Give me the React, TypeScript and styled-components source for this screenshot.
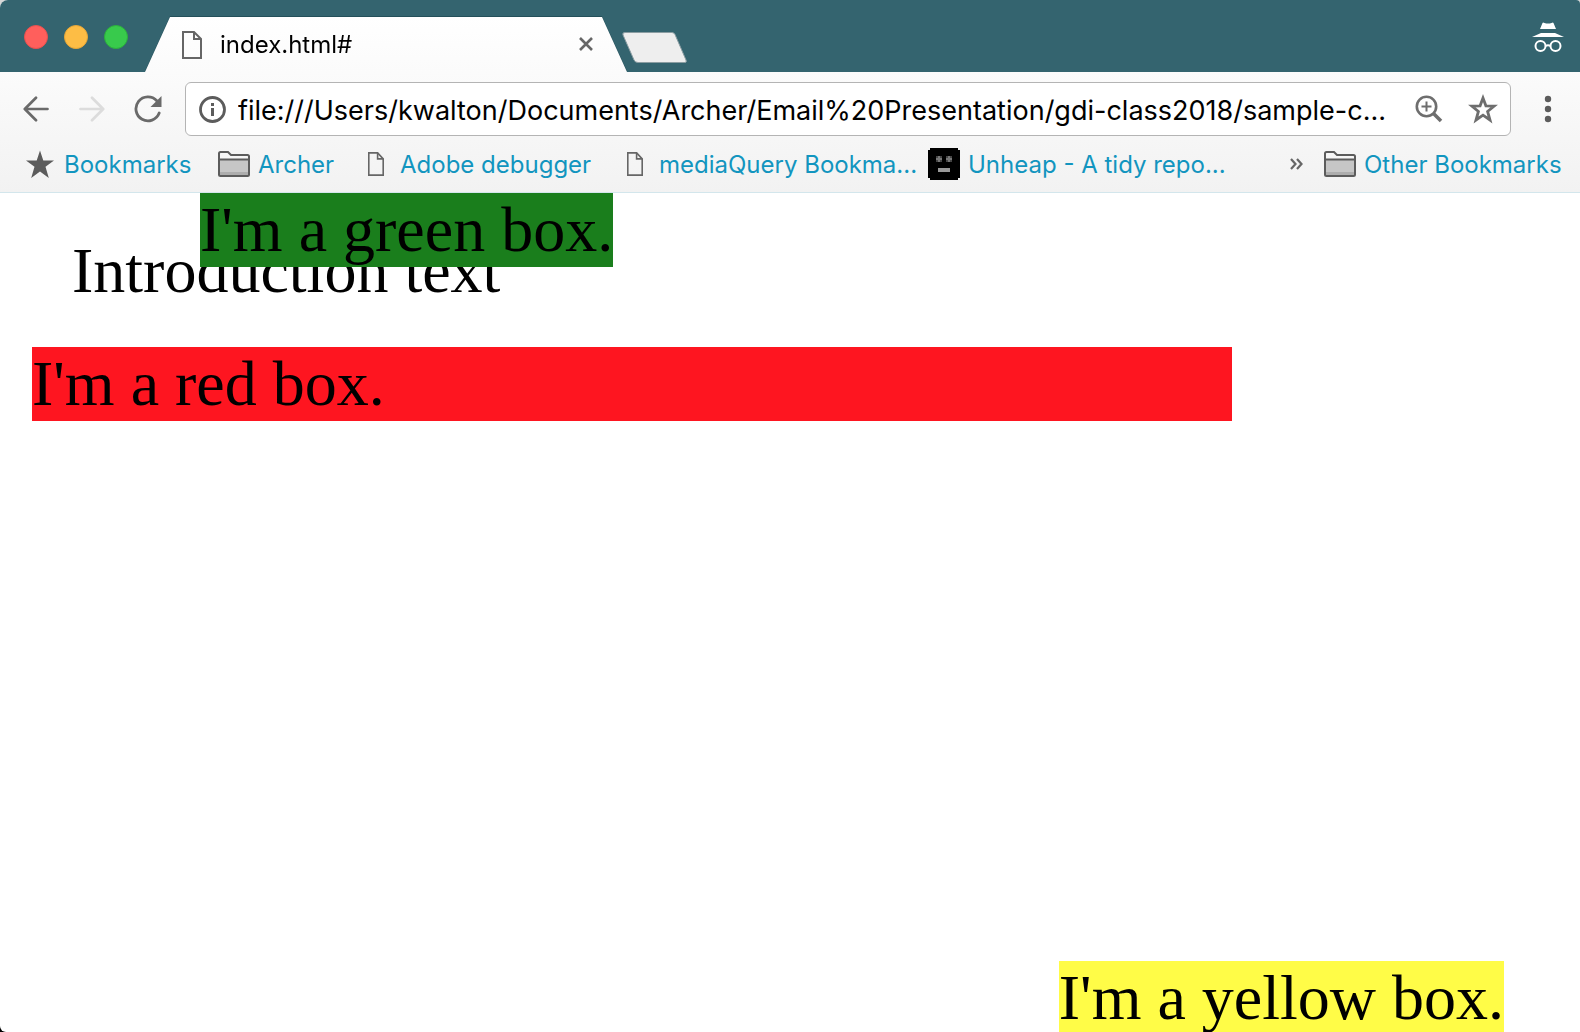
import React from "react";
import styled, { createGlobalStyle } from "styled-components";

const GlobalStyle = createGlobalStyle`
  * { box-sizing: border-box; }
  html { background: linear-gradient(#d8d8d8, #000); height: 100%; }
  body { margin: 0; }
  button { padding: 0; border: 0; background: none; cursor: pointer; }
`;

const uiFont = `Inter, "Liberation Sans", sans-serif`;

const BrowserWindow = styled.div`
  display: flex;
  flex-direction: column;
  height: 100vh;
  overflow: hidden;
  border-radius: 8px 4px 0 6px;
  background: #fff;
  font-family: ${uiFont};
`;

const TitleBar = styled.header`
  display: flex;
  align-items: flex-end;
  flex: none;
  height: 72px;
  padding: 0 16px 0 24px;
  background: #34646f;
`;

const TrafficLights = styled.div`
  display: flex;
  gap: 16px;
  width: 121px;
  padding-bottom: 23px;
`;

const Light = styled.button<{ $fill: string; $edge: string }>`
  width: 24px;
  height: 24px;
  border: 1px solid ${(p) => p.$edge};
  border-radius: 50%;
  background: ${(p) => p.$fill};
`;

const TabEdge = styled.div`
  flex: 0 1 482px;
  filter: drop-shadow(0 -1px 0 #24505a);
`;

const Tab = styled.div`
  display: flex;
  align-items: center;
  height: 55px;
  padding: 1px 34px 0 37px;
  background: linear-gradient(#fff, #fbfbfb);
  clip-path: polygon(25px 0, calc(100% - 25px) 0, 100% 100%, 0 100%);
`;

const TabTitle = styled.span`
  flex: 1;
  padding-left: 18px;
  font-size: 24px;
  line-height: 32px;
  color: #000;
`;

const NewTab = styled.button`
  display: flex;
  margin: 0 auto 8px -6px;
`;

const Incognito = styled.div`
  display: flex;
  padding-bottom: 18px;
`;

const Controls = styled.div`
  flex: none;
  padding-top: 10px;
  border-bottom: 1px solid #d3e6ec;
  background: linear-gradient(#fbfbfb, #f2f2f2);
`;

const Toolbar = styled.div`
  display: flex;
  align-items: center;
  padding: 0 4px 0 8px;
`;

const ToolButton = styled.button`
  display: flex;
  align-items: center;
  justify-content: center;
  flex: none;
  width: 56px;
  height: 54px;
`;

const Omnibox = styled.form`
  display: flex;
  align-items: center;
  flex: 1;
  min-width: 0;
  height: 54px;
  margin: 0 9px;
  border: 1px solid #b4b4b4;
  border-radius: 6px;
  background: #fff;
`;

const PageInfo = styled(ToolButton)`
  width: 52px;
  height: 52px;
`;

const OmniAction = styled(ToolButton)`
  width: 54px;
  height: 52px;
`;

const Address = styled.input`
  flex: 1;
  min-width: 0;
  height: 52px;
  padding: 2px 0 0;
  border: 0;
  outline: 0;
  background: none;
  font-family: ${uiFont};
  font-size: 27px;
  color: #000;
  text-overflow: ellipsis;
`;

const BookmarksBar = styled.nav`
  display: flex;
  align-items: center;
  height: 56px;
  padding: 0 14px 0 24px;
`;

const Bookmark = styled.a<{ $width?: number }>`
  display: flex;
  align-items: center;
  gap: 8px;
  flex: none;
  width: ${(p) => (p.$width ? `${p.$width}px` : "auto")};
  font-size: 24px;
  line-height: 32px;
  white-space: nowrap;
  color: #1295bf;
  text-decoration: none;
`;

const BookmarkIcon = styled.span`
  display: flex;
  align-items: center;
  justify-content: center;
  width: 32px;
  height: 32px;
`;

const BookmarkLabel = styled.span`
  padding-top: 2px;
`;

const Overflow = styled.button`
  display: flex;
  margin: 0 21px 0 auto;
`;

const Viewport = styled.main`
  position: relative;
  flex: 1;
  min-height: 0;
  overflow: hidden;
  padding: 41px 32px 0;
  font-family: "Liberation Serif", "Times New Roman", serif;
  font-size: 64px;
  line-height: 74px;
  color: #000;
`;

const Intro = styled.p`
  margin: 0 40px 39px;
`;

const RedBox = styled.div`
  max-width: 1200px;
  background: #fe1520;
`;

const GreenBox = styled.div`
  position: absolute;
  top: 0;
  left: 200px;
  background: #1a7e1c;
`;

const YellowBox = styled.div`
  position: absolute;
  right: 76px;
  bottom: -3px;
  background: #fffc47;
`;

const PageIcon = ({ width, height }: { width: number; height: number }) => (
  <svg width={width} height={height} viewBox="0 0 20 28" preserveAspectRatio="none" fill="none" stroke="#666" strokeWidth="2">
    <path d="M1 1H12L19 8V27H1Z" />
    <path d="M12 1V8H19" />
  </svg>
);

const FolderIcon = () => (
  <svg width="32" height="26" viewBox="0 0 32 26">
    <path d="M1 23.5V2.5Q1 1 2.500 1H10L13 4H29.500Q31 4 31 5.500V23.500Q31 25 29.500 25H2.500Q1 25 1 23.500Z" fill="#f6f6f6" />
    <path d="M1 9H31V24H1Z" fill="#c6c6c6" />
    <path d="M2 21H30V24H2Z" fill="#adadad" />
    <path d="M1 23.500V2.500Q1 1 2.500 1H10L13 4H29.500Q31 4 31 5.500V23.500Q31 25 29.500 25H2.500Q1 25 1 23.500ZM1 8.500H31" fill="none" stroke="#5c5c5c" strokeWidth="2" />
  </svg>
);

const BackIcon = () => (
  <svg width="26" height="26" viewBox="0 0 26 26" fill="none" stroke="#6a6a6a" strokeWidth="2.700" strokeLinecap="round" strokeLinejoin="round">
    <path d="M24.500 13H2M13 1.800L1.800 13L13 24.200" />
  </svg>
);

const ForwardIcon = () => (
  <svg width="26" height="26" viewBox="0 0 26 26" fill="none" stroke="#dcdcdc" strokeWidth="2.700" strokeLinecap="round" strokeLinejoin="round">
    <path d="M1.500 13H24M13 1.800L24.200 13L13 24.200" />
  </svg>
);

const ReloadIcon = () => (
  <svg width="28" height="28" viewBox="0 0 28 28">
    <path d="M22.800 5.700A12 12 0 1 0 25.200 18" fill="none" stroke="#6a6a6a" strokeWidth="2.800" strokeLinecap="round" />
    <path d="M27.500 1V12H16.500Z" fill="#6a6a6a" />
  </svg>
);

const starPath = "M14 0.500L17.300 10.400L28 10.500L19.500 16.800L22.800 28L14 21.500L5.200 28L8.500 16.800L0 10.500L10.700 10.400Z";

const pageBookmarks = [
  { label: "Archer", icon: <FolderIcon />, width: 142 },
  { label: "Adobe debugger", icon: <PageIcon width={16} height={24} />, width: 259 },
  { label: "mediaQuery Bookma...", icon: <PageIcon width={16} height={24} />, width: 309 },
];

export default function App() {
  return (
    <BrowserWindow>
      <GlobalStyle />
      <TitleBar>
        <TrafficLights>
          <Light type="button" aria-label="Close window" $fill="#ff5f5c" $edge="#e8504e" />
          <Light type="button" aria-label="Minimize window" $fill="#fdbd45" $edge="#e6a637" />
          <Light type="button" aria-label="Zoom window" $fill="#38ca4c" $edge="#2cb03c" />
        </TrafficLights>
        <TabEdge>
          <Tab>
            <PageIcon width={20} height={28} />
            <TabTitle>index.html#</TabTitle>
            <button type="button" aria-label="Close tab">
              <svg width="14" height="14" viewBox="0 0 14 14" stroke="#666" strokeWidth="2.600">
                <path d="M1 1L13 13M13 1L1 13" />
              </svg>
            </button>
          </Tab>
        </TabEdge>
        <NewTab type="button" aria-label="New tab">
          <svg width="67" height="33" viewBox="0 0 67 33">
            <path d="M4 1.500H51Q53 1.500 54 3.500L65 29Q66 31.500 64 31.500H17Q14 31.500 13 29L2 4Q1 1.500 4 1.500Z" fill="#eee" stroke="#8b9da2" />
          </svg>
        </NewTab>
        <Incognito>
          <svg width="32" height="32" viewBox="0 0 32 32" fill="#fff">
            <path d="M10.500 1Q11 0 12.500 1Q16 2.200 19.500 1Q21 0 21.500 1L24 7H8Z" />
            <path d="M9 11H23L32 15H0Z" />
            <g fill="none" stroke="#fff" strokeWidth="2">
              <circle cx="8.500" cy="24" r="5" />
              <circle cx="23.500" cy="24" r="5" />
              <path d="M13.500 24Q16 22.500 18.500 24" />
            </g>
          </svg>
        </Incognito>
      </TitleBar>

      <Controls>
        <Toolbar>
          <ToolButton type="button" aria-label="Back"><BackIcon /></ToolButton>
          <ToolButton type="button" aria-label="Forward" disabled><ForwardIcon /></ToolButton>
          <ToolButton type="button" aria-label="Reload"><ReloadIcon /></ToolButton>
          <Omnibox onSubmit={(e) => e.preventDefault()}>
            <PageInfo type="button" aria-label="Page information">
              <svg width="28" height="28" viewBox="0 0 28 28" fill="#5c5c5c">
                <circle cx="14.500" cy="14.500" r="12" fill="none" stroke="#5c5c5c" strokeWidth="2.800" />
                <path d="M13 8H16V11H13ZM13 13H16V21H13Z" />
              </svg>
            </PageInfo>
            <Address
              aria-label="Address"
              readOnly
              value="file:///Users/kwalton/Documents/Archer/Email%20Presentation/gdi-class2018/sample-c..."
            />
            <OmniAction type="button" aria-label="Zoom">
              <svg width="28" height="28" viewBox="0 0 28 28" fill="none" stroke="#6e6e6e" strokeWidth="2.600">
                <circle cx="11.500" cy="11.500" r="9.700" />
                <path d="M18.500 18.500L26 26" strokeWidth="3.600" />
                <path d="M11.500 6.500V16.500M6.500 11.500H16.500" strokeWidth="2" />
              </svg>
            </OmniAction>
            <OmniAction type="button" aria-label="Bookmark this page">
              <svg width="30" height="30" viewBox="-1 -1 30 30" fill="none" stroke="#6e6e6e" strokeWidth="2.800">
                <path d="M14 3L16.900 10.800L25.200 11.100L18.600 16.500L21 25L14 20.100L7 25L9.400 16.500L2.800 11.100L11.100 10.800Z" />
              </svg>
            </OmniAction>
          </Omnibox>
          <ToolButton type="button" aria-label="Menu">
            <svg width="8" height="28" viewBox="0 0 8 28" fill="#5c5c5c">
              <circle cx="4" cy="4" r="3.200" />
              <circle cx="4" cy="14" r="3.200" />
              <circle cx="4" cy="24" r="3.200" />
            </svg>
          </ToolButton>
        </Toolbar>

        <BookmarksBar aria-label="Bookmarks">
          <Bookmark href="#" $width={194}>
            <BookmarkIcon>
              <svg width="30" height="30" viewBox="-1 -1 30 30" fill="#5c5c5c"><path d={starPath} /></svg>
            </BookmarkIcon>
            <BookmarkLabel>Bookmarks</BookmarkLabel>
          </Bookmark>
          {pageBookmarks.map((b) => (
            <Bookmark key={b.label} href="#" $width={b.width}>
              <BookmarkIcon>{b.icon}</BookmarkIcon>
              <BookmarkLabel>{b.label}</BookmarkLabel>
            </Bookmark>
          ))}
          <Bookmark href="#">
            <BookmarkIcon>
              <svg width="32" height="32" viewBox="0 0 32 32">
                <path d="M2 0H30V2H32V30H30V32H2V30H0V2H2Z" fill="#000" />
                <path d="M8 8H14V14H8ZM18 8H24V14H18Z" fill="#444" />
                <path d="M10 8H12V14H10ZM20 8H22V14H20ZM8 10H14V12H8ZM18 10H24V12H18Z" fill="#777" />
                <path d="M10 20H22V24H10Z" fill="#999" />
              </svg>
            </BookmarkIcon>
            <BookmarkLabel>Unheap - A tidy repo...</BookmarkLabel>
          </Bookmark>
          <Overflow type="button" aria-label="More bookmarks">
            <svg width="13" height="12" viewBox="0 0 13 12" fill="none" stroke="#666" strokeWidth="2.200">
              <path d="M1 1L5.500 6L1 11M7 1L11.500 6L7 11" />
            </svg>
          </Overflow>
          <Bookmark href="#" $width={242}>
            <BookmarkIcon><FolderIcon /></BookmarkIcon>
            <BookmarkLabel>Other Bookmarks</BookmarkLabel>
          </Bookmark>
        </BookmarksBar>
      </Controls>

      <Viewport>
        <Intro>Introduction text</Intro>
        <RedBox>I'm a red box.</RedBox>
        <GreenBox>I'm a green box.</GreenBox>
        <YellowBox>I'm a yellow box.</YellowBox>
      </Viewport>
    </BrowserWindow>
  );
}
